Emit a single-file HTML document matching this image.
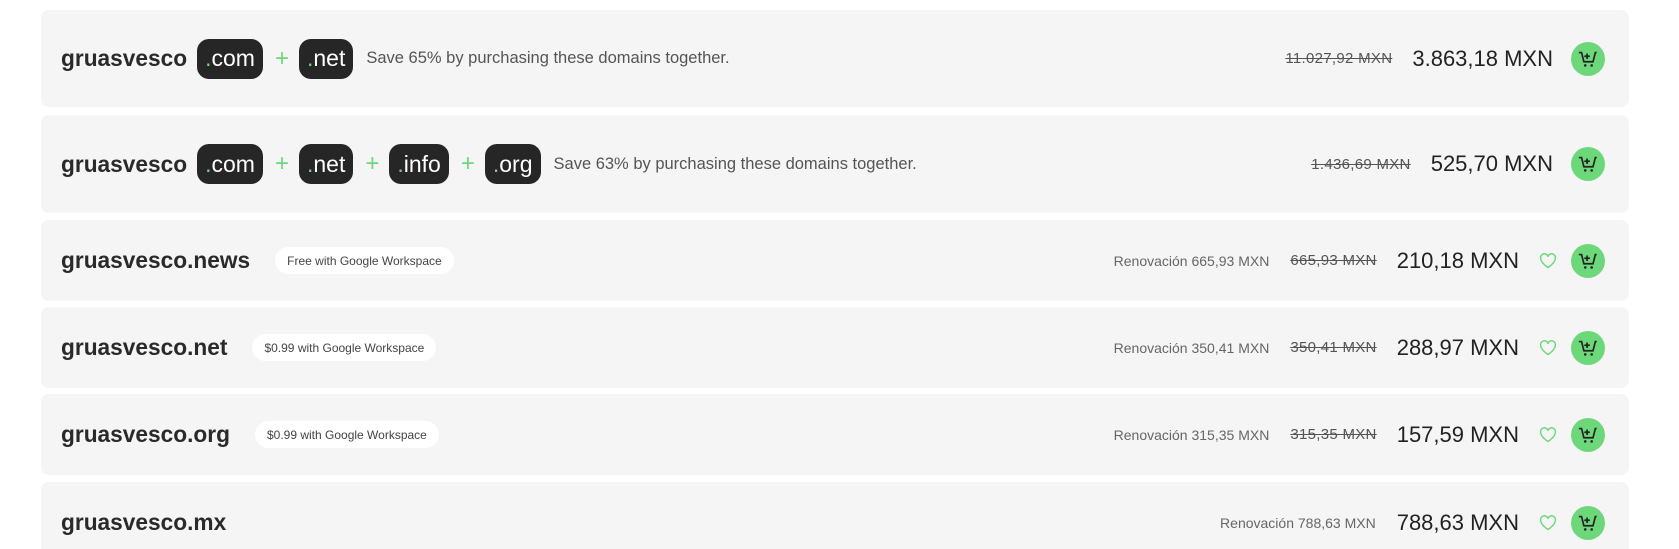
<!DOCTYPE html>
<html><head><meta charset="utf-8"><style>
*{margin:0;padding:0;box-sizing:border-box}
html{width:1679px;height:549px;overflow:hidden}
body{width:1679px;height:549px;overflow:hidden;background:#fff;font-family:"Liberation Sans",Arial,sans-serif;color:#222;position:relative}
.card{position:absolute;left:41px;width:1588px;background:#f5f5f5;border-radius:8px;display:flex;align-items:center;padding-left:20px}
.dom{font-size:22.7px;font-weight:bold;color:#2a2a2a;letter-spacing:0}
.pill{display:inline-flex;align-items:center;height:40px;padding:0 8px;background:#262626;color:#fff;border-radius:12px;font-size:23px;margin-left:10px}
.pill b{color:#6fd67a;font-weight:normal}
.plus{color:#6fd67a;font-size:24px;margin-left:12px;margin-right:0}
.save{font-size:16.5px;color:#555;margin-left:13px}
.badge{background:#fff;border-radius:14px;height:27px;display:inline-flex;align-items:center;padding:0 12px;font-size:12px;color:#444;margin-left:25px}
.right{position:absolute;right:24px;display:flex;align-items:center}
.ren{font-size:14px;color:#666;margin-right:21px}
.strike{font-size:15px;color:#555;text-decoration:line-through;margin-right:20px;letter-spacing:0.3px}
.price{font-size:22px;color:#222}
.heart{margin-left:20px;width:18px;height:16px}
.heart + .cart{margin-left:14px}
.cart{margin-left:18px;width:34px;height:34px;border-radius:50%;background:#6dd87a;display:flex;align-items:center;justify-content:center}
</style></head><body>
<svg width="0" height="0" style="position:absolute"><defs>
<symbol id="c" viewBox="0 0 24 24"><path d="M2 5h3l2.5 10h10L20 5h1.5" fill="none" stroke="#222" stroke-width="1.8"/><path d="M11 6v6M8 9h6" stroke="#222" stroke-width="1.8"/><circle cx="9" cy="19" r="1.4" fill="#222"/><circle cx="16" cy="19" r="1.4" fill="#222"/></symbol>
<symbol id="h" viewBox="0 0 24 22"><path d="M12 20S2 13.5 2 7.5A5 5 0 0 1 12 5a5 5 0 0 1 10 2.5C22 13.5 12 20 12 20z" fill="none" stroke="#6dd87a" stroke-width="2"/></symbol>
</defs></svg>

<div class="card" style="top:10px;height:97px">
<span class="dom">gruasvesco</span><span class="pill"><b>.</b>com</span><span class="plus">+</span><span class="pill"><b>.</b>net</span><span class="save">Save 65% by purchasing these domains together.</span>
<div class="right"><span class="strike">11.027,92 MXN</span><span class="price">3.863,18 MXN</span><span class="cart"><svg width="22" height="22"><use href="#c"/></svg></span></div>
</div>

<div class="card" style="top:115px;height:98px">
<span class="dom">gruasvesco</span><span class="pill"><b>.</b>com</span><span class="plus">+</span><span class="pill"><b>.</b>net</span><span class="plus">+</span><span class="pill"><b>.</b>info</span><span class="plus">+</span><span class="pill"><b>.</b>org</span><span class="save">Save 63% by purchasing these domains together.</span>
<div class="right"><span class="strike">1.436,69 MXN</span><span class="price">525,70 MXN</span><span class="cart"><svg width="22" height="22"><use href="#c"/></svg></span></div>
</div>

<div class="card" style="top:220px;height:81px">
<span class="dom">gruasvesco.news</span><span class="badge">Free with Google Workspace</span>
<div class="right"><span class="ren">Renovación 665,93 MXN</span><span class="strike">665,93 MXN</span><span class="price">210,18 MXN</span><svg class="heart"><use href="#h"/></svg><span class="cart"><svg width="22" height="22"><use href="#c"/></svg></span></div>
</div>

<div class="card" style="top:307px;height:81px">
<span class="dom">gruasvesco.net</span><span class="badge">$0.99 with Google Workspace</span>
<div class="right"><span class="ren">Renovación 350,41 MXN</span><span class="strike">350,41 MXN</span><span class="price">288,97 MXN</span><svg class="heart"><use href="#h"/></svg><span class="cart"><svg width="22" height="22"><use href="#c"/></svg></span></div>
</div>

<div class="card" style="top:394px;height:81px">
<span class="dom">gruasvesco.org</span><span class="badge">$0.99 with Google Workspace</span>
<div class="right"><span class="ren">Renovación 315,35 MXN</span><span class="strike">315,35 MXN</span><span class="price">157,59 MXN</span><svg class="heart"><use href="#h"/></svg><span class="cart"><svg width="22" height="22"><use href="#c"/></svg></span></div>
</div>

<div class="card" style="top:482px;height:81px">
<span class="dom">gruasvesco.mx</span>
<div class="right"><span class="ren">Renovación 788,63 MXN</span><span class="price">788,63 MXN</span><svg class="heart"><use href="#h"/></svg><span class="cart"><svg width="22" height="22"><use href="#c"/></svg></span></div>
</div>
</body></html>
